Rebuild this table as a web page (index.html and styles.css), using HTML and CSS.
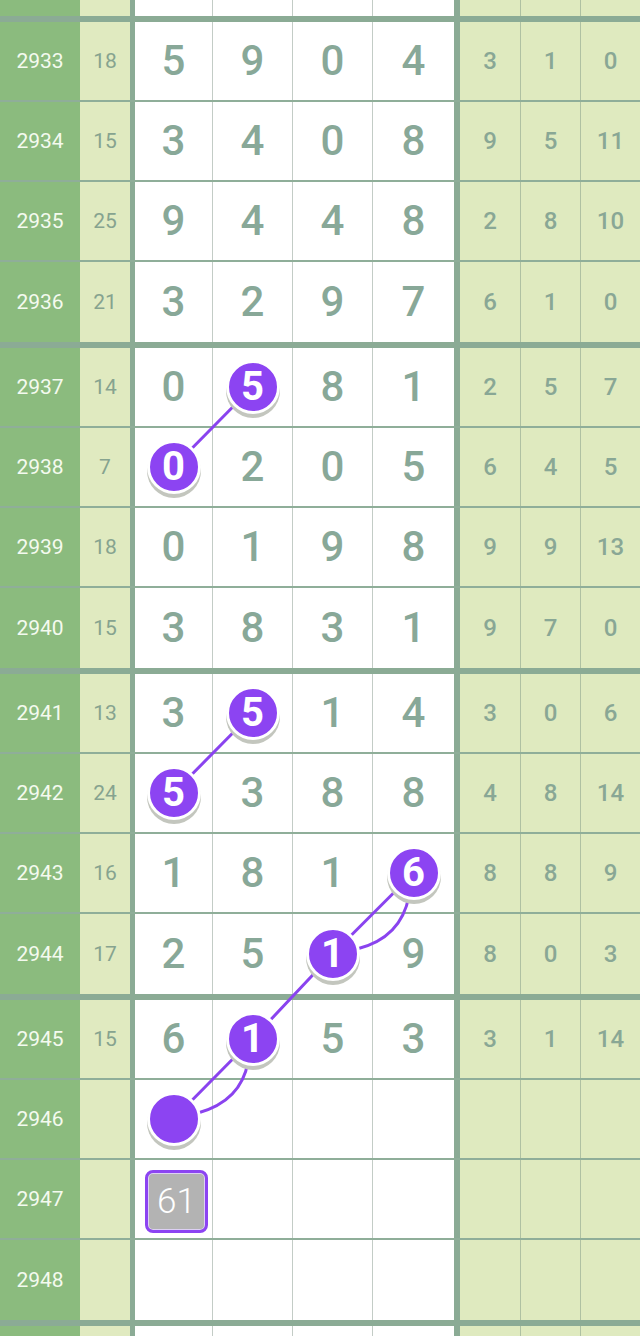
FILE: index.html
```html
<!DOCTYPE html>
<html lang="zh">
<head>
<meta charset="utf-8">
<title>走势图</title>
<link rel="stylesheet" href="styles.css">
</head>
<body>
<div class="board">
  <div class="group group-edge">
    <div class="row row-top">
      <div class="c issue"></div><div class="c sum"></div>
      <div class="c d"></div><div class="c d"></div><div class="c d"></div><div class="c d d4"></div>
      <div class="c r"></div><div class="c r"></div><div class="c r rl"></div>
    </div>
  </div>

  <div class="group">
    <div class="row"><div class="c issue">2933</div><div class="c sum">18</div><div class="c d">5</div><div class="c d">9</div><div class="c d">0</div><div class="c d d4">4</div><div class="c r">3</div><div class="c r">1</div><div class="c r rl">0</div></div>
    <div class="row"><div class="c issue">2934</div><div class="c sum">15</div><div class="c d">3</div><div class="c d">4</div><div class="c d">0</div><div class="c d d4">8</div><div class="c r">9</div><div class="c r">5</div><div class="c r rl">11</div></div>
    <div class="row"><div class="c issue">2935</div><div class="c sum">25</div><div class="c d">9</div><div class="c d">4</div><div class="c d">4</div><div class="c d d4">8</div><div class="c r">2</div><div class="c r">8</div><div class="c r rl">10</div></div>
    <div class="row"><div class="c issue">2936</div><div class="c sum">21</div><div class="c d">3</div><div class="c d">2</div><div class="c d">9</div><div class="c d d4">7</div><div class="c r">6</div><div class="c r">1</div><div class="c r rl">0</div></div>
  </div>

  <div class="group">
    <div class="row"><div class="c issue">2937</div><div class="c sum">14</div><div class="c d">0</div><div class="c d"><span class="ball">5</span></div><div class="c d">8</div><div class="c d d4">1</div><div class="c r">2</div><div class="c r">5</div><div class="c r rl">7</div></div>
    <div class="row"><div class="c issue">2938</div><div class="c sum">7</div><div class="c d"><span class="ball">0</span></div><div class="c d">2</div><div class="c d">0</div><div class="c d d4">5</div><div class="c r">6</div><div class="c r">4</div><div class="c r rl">5</div></div>
    <div class="row"><div class="c issue">2939</div><div class="c sum">18</div><div class="c d">0</div><div class="c d">1</div><div class="c d">9</div><div class="c d d4">8</div><div class="c r">9</div><div class="c r">9</div><div class="c r rl">13</div></div>
    <div class="row"><div class="c issue">2940</div><div class="c sum">15</div><div class="c d">3</div><div class="c d">8</div><div class="c d">3</div><div class="c d d4">1</div><div class="c r">9</div><div class="c r">7</div><div class="c r rl">0</div></div>
  </div>

  <div class="group">
    <div class="row"><div class="c issue">2941</div><div class="c sum">13</div><div class="c d">3</div><div class="c d"><span class="ball">5</span></div><div class="c d">1</div><div class="c d d4">4</div><div class="c r">3</div><div class="c r">0</div><div class="c r rl">6</div></div>
    <div class="row"><div class="c issue">2942</div><div class="c sum">24</div><div class="c d"><span class="ball">5</span></div><div class="c d">3</div><div class="c d">8</div><div class="c d d4">8</div><div class="c r">4</div><div class="c r">8</div><div class="c r rl">14</div></div>
    <div class="row"><div class="c issue">2943</div><div class="c sum">16</div><div class="c d">1</div><div class="c d">8</div><div class="c d">1</div><div class="c d d4"><span class="ball">6</span></div><div class="c r">8</div><div class="c r">8</div><div class="c r rl">9</div></div>
    <div class="row"><div class="c issue">2944</div><div class="c sum">17</div><div class="c d">2</div><div class="c d">5</div><div class="c d"><span class="ball">1</span></div><div class="c d d4">9</div><div class="c r">8</div><div class="c r">0</div><div class="c r rl">3</div></div>
  </div>

  <div class="group">
    <div class="row"><div class="c issue">2945</div><div class="c sum">15</div><div class="c d">6</div><div class="c d"><span class="ball">1</span></div><div class="c d">5</div><div class="c d d4">3</div><div class="c r">3</div><div class="c r">1</div><div class="c r rl">14</div></div>
    <div class="row"><div class="c issue">2946</div><div class="c sum"></div><div class="c d"><span class="ball"></span></div><div class="c d"></div><div class="c d"></div><div class="c d d4"></div><div class="c r"></div><div class="c r"></div><div class="c r rl"></div></div>
    <div class="row"><div class="c issue">2947</div><div class="c sum"></div><div class="c d"><span class="pick">61</span></div><div class="c d"></div><div class="c d"></div><div class="c d d4"></div><div class="c r"></div><div class="c r"></div><div class="c r rl"></div></div>
    <div class="row"><div class="c issue">2948</div><div class="c sum"></div><div class="c d"></div><div class="c d"></div><div class="c d"></div><div class="c d d4"></div><div class="c r"></div><div class="c r"></div><div class="c r rl"></div></div>
  </div>

  <div class="row row-bottom">
    <div class="c issue"></div><div class="c sum"></div>
    <div class="c d"></div><div class="c d"></div><div class="c d"></div><div class="c d d4"></div>
    <div class="c r"></div><div class="c r"></div><div class="c r rl"></div>
  </div>

  <svg class="links" width="640" height="1336" viewBox="0 0 640 1336" aria-hidden="true">
    <g fill="none" stroke="#8a43ef" stroke-width="3" stroke-linecap="round">
      <line x1="252.5" y1="387" x2="173.5" y2="467"/>
      <line x1="252.5" y1="713" x2="173.5" y2="793"/>
      <line x1="413.5" y1="873" x2="332.5" y2="954"/>
      <line x1="332.5" y1="954" x2="252.5" y2="1039"/>
      <line x1="252.5" y1="1039" x2="173.5" y2="1119"/>
      <path d="M409 896 Q401 938 357 949"/>
      <path d="M248 1062 Q241 1101 198 1113"/>
    </g>
  </svg>
</div>
</body>
</html>
```

FILE: styles.css
```css
html, body {
  margin: 0;
  padding: 0;
  background: #ffffff;
}

.board {
  position: relative;
  width: 640px;
  height: 1336px;
  overflow: hidden;
  font-family: "Roboto", "DejaVu Sans", sans-serif;
}

.group {
  border-bottom: 6px solid #8bab95;
}

.row {
  display: grid;
  grid-template-columns: 80px 55px 78px 80px 80px 87px 61px 60px 59px;
  height: 80px;
  box-sizing: border-box;
  border-bottom: 2px solid #8fae99;
}

.group .row:last-child {
  border-bottom: none;
}

.row-top {
  height: 16px;
}

.row-bottom {
  height: 10px;
  border-bottom: none;
}

.c {
  display: flex;
  align-items: center;
  justify-content: center;
  box-sizing: border-box;
  line-height: 1;
}

.issue {
  background: #8bbb7e;
  color: #f4faef;
  font-size: 21px;
  font-weight: 400;
}

.sum {
  background: #e0eac0;
  color: #86a38f;
  font-size: 21px;
  border-right: 5px solid #8bab95;
}

.d {
  background: #ffffff;
  color: #88a898;
  font-size: 42px;
  font-weight: 500;
  border-right: 1px solid #c3ccc6;
}

.d4 {
  border-right: 6px solid #8bab95;
}

.r {
  background: #dfeabf;
  color: #89a795;
  font-size: 24px;
  font-weight: 500;
  border-right: 1px solid #afc1a2;
}

.rl {
  border-right: none;
}

.ball {
  position: relative;
  z-index: 2;
  display: flex;
  align-items: center;
  justify-content: center;
  width: 48px;
  height: 48px;
  border: 3px solid #ffffff;
  border-radius: 50%;
  background: #8c44f2;
  box-shadow: 0 4px 0 #c3c6be;
  color: #ffffff;
  font-size: 40px;
  font-weight: 700;
  line-height: 1;
}

.pick {
  position: relative;
  z-index: 2;
  display: flex;
  align-items: center;
  justify-content: center;
  width: 57px;
  height: 57px;
  margin-left: 6px;
  margin-top: 4px;
  border: 3px solid #8c44f2;
  border-radius: 8px;
  background: #b3b3b3;
  box-shadow: inset 0 0 0 1px #ddd0f5;
  color: #ffffff;
  font-size: 35px;
  font-weight: 300;
  line-height: 1;
}

.links {
  position: absolute;
  left: 0;
  top: 0;
  z-index: 1;
  pointer-events: none;
}
```
